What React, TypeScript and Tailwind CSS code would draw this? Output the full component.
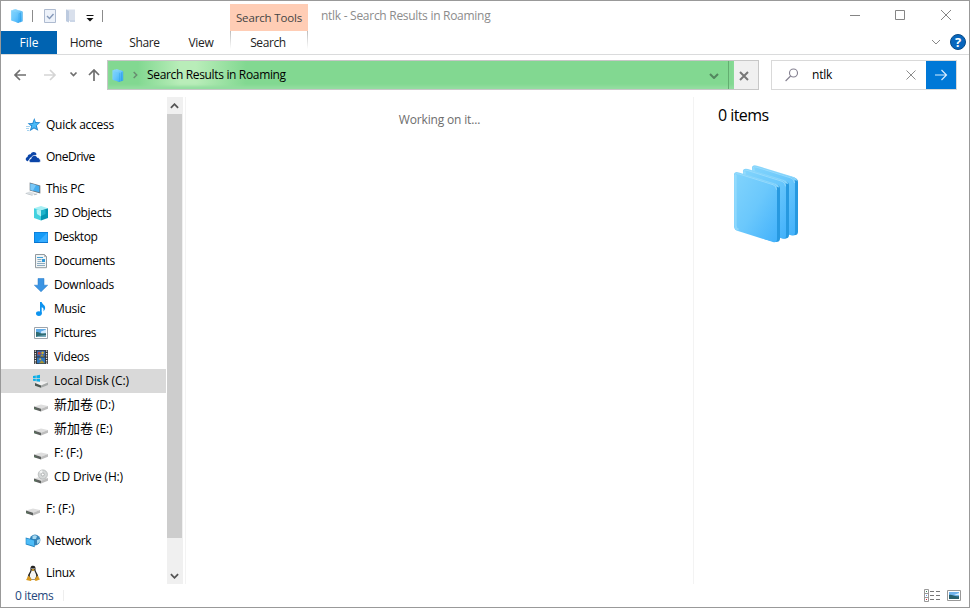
import type { ReactNode } from "react";

const driveBase = (
  <>
    <path d="M1 9.600L8 7.400l7 1.700-7 2.600z" fill="#dedede" />
    <path d="M1 9.600l7 2.100v2.800l-7-2.200z" fill="#5c605e" />
    <path d="M8 11.700l7-2.600v2.600l-7 2.800z" fill="#bdbdbd" />
    <path d="M1.600 11.200l1.600.5v.8L1.600 12z" fill="#508c56" />
  </>
);

const icons: Record<string, ReactNode> = {
  quick: (
    <>
      <path d="M9.300 1l1.500 4.100 4.700.200-3.700 3.100 1.500 5.400-4.300-2.400-4.400 2.900 1.600-5.100-3.600-2.900 4.800-.2z" fill="#2488d0" />
      <path d="M9.300 2.600l1 3.400 3.700.200-3.200 2.500.9 3.400L9 10.300l-2.700 1.800 1-3.500L4.600 7.100l3.600-.2z" fill="#49b9f6" />
      <path d="M1 9.500h4M1 11.500h3M2 13.500h2" stroke="#9ccdec" strokeWidth=".9" />
    </>
  ),
  onedrive: (
    <>
      <path d="M2.900 12.300C.2 12.200 0 8.700 2.500 8.100 2.500 5.900 4 4.900 5.600 5.200 6.900 2.300 10.800 2.500 11.600 5.400L8 7l-3 2z" fill="#0b45a8" />
      <path d="M5.900 13.500C3.400 13.200 3.700 10 6 9.800 6.500 5.900 11.200 5.300 12.200 8.400c1.700-.1 2.200.9 2.100 1.600 1.900.6 1.500 3.500-.3 3.500z" fill="#0b45a8" stroke="#fff" strokeWidth=".6" />
    </>
  ),
  pc: (
    <>
      <path d="M4.700 1.600l10.600 2.800v8L4.700 9.600z" fill="#6a747d" />
      <path d="M5.400 2.500l9 2.400v6.400L5.400 9z" fill="#45aef0" />
      <path d="M5.400 2.500L11 4 8 9.700 5.400 9z" fill="#7cc9f7" />
      <path d="M.7 12l3.700-1.500 6.800 1.800-3.700 1.800z" fill="#dadfe2" />
      <path d="M.7 12l6.800 2.100v.7L.7 12.800zM9 13.200l3.200-.6v.8l-3 .8z" fill="#b4bcc2" />
    </>
  ),
  objects: (
    <>
      <path d="M1 3.200L8 1l7 2.200L8 5.400z" fill="#a6eff4" />
      <path d="M1 3.200l7 2.200v10l-7-2.300z" fill="#42d1df" />
      <path d="M15 3.200L8 5.400v10l7-2.300z" fill="#0697b2" />
      <path d="M3.500 4.500L8 5.400v6L4 9z" fill="#b5f3f5" />
      <path d="M8 5.400l4.500-1V9L8 11z" fill="#1fb5cb" />
    </>
  ),
  desktop: (
    <>
      <path d="M1 3h14v11H1z" fill="#0873ce" />
      <path d="M1.600 3.600h12.800V13H1.600z" fill="#159bf7" />
      <path d="M14.400 3.600V13H5z" fill="#37adff" />
    </>
  ),
  documents: (
    <>
      <path d="M2.500 1.500h9l2 2v11.200h-11z" fill="#f1f4f5" stroke="#929a9f" />
      <path d="M11.500 1.500v2h2" fill="none" stroke="#929a9f" strokeWidth=".7" />
      <path d="M4.500 6.500h4M4.500 8.500h4M4 10.500h8M4 12.500h8" stroke="#8babc0" />
      <path d="M9 6h3v3H9z" fill="#309ad8" />
      <path d="M4 4.500h6" stroke="#40a1d9" />
    </>
  ),
  downloads: <path d="M5 1.500h6v6.700h3.700L8 14.800 1.300 8.200H5z" fill="#3b94e3" stroke="#2579c6" strokeWidth=".5" />,
  music: (
    <>
      <ellipse cx="5.900" cy="12.600" rx="2.900" ry="2.300" fill="#0d93ef" />
      <path d="M7 1h1.700c.3 2.500 4 3 3.400 6.500-.3 1.500-1 2.200-1.900 2.900.8-2 .4-3.600-1.500-4.100v6.400H7z" fill="#0d93ef" />
    </>
  ),
  pictures: (
    <>
      <path d="M1.500 2.500h13v11h-13z" fill="#fff" stroke="#9ca4ac" />
      <path d="M3 4h10v4.500H3z" fill="#61ace9" />
      <path d="M8 6.500l5-2V8H8z" fill="#cfeaff" />
      <path d="M3 7c3-.6 4 1.200 6 1.500l4-.2V12H3z" fill="#2e6b73" />
      <path d="M5 11l8-1v2H3z" fill="#77aabd" />
    </>
  ),
  videos: (
    <>
      <path d="M1 1h14v14H1z" fill="#343638" />
      <path d="M4 1.700h8v5.800H4z" fill="#3764ad" />
      <path d="M4 8.500h8v5.800H4z" fill="#2f76bd" />
      <path d="M2.400 1.500v14M13.600 1.500v14" stroke="#e8e8e8" strokeWidth="1.300" strokeDasharray="1.300 1.100" />
      <circle cx="6.200" cy="4.300" r="1.500" fill="#c1483b" />
      <circle cx="9.600" cy="3.800" r="1.300" fill="#d5b332" />
      <path d="M7 7.500l2-2.400 2 2.400zM6 14.300l2.700-3 3.200 3z" fill="#a99535" />
      <circle cx="7.200" cy="10.300" r="1" fill="#e1ad3b" />
    </>
  ),
  windows: (
    <>
      <path d="M2 10l6-2 7 1.600-7 2.800z" fill="#efefef" />
      <path d="M2 10l6 2.400v2.300l-6-2z" fill="#4d5752" />
      <path d="M8 12.400l7-2.800V12l-7 2.700z" fill="#a5a8a7" />
      <path d="M0 2.900l2.800-.4V5H0zM3.400 2.400L7 1.800V5H3.400zM0 5.700h2.800v2.400L0 7.700zM3.400 5.700H7v3.100l-3.600-.5z" fill="#0aaee8" />
    </>
  ),
  drive: driveBase,
  cd: (
    <>
      {driveBase}
      <circle cx="9.800" cy="5.500" r="4.600" fill="#d5d8d8" stroke="#a9aeae" strokeWidth=".7" />
      <path d="M9.800 5.500L6.200 3a4.300 4.300 0 0 1 3-1.800z" fill="#f5f6f6" />
      <circle cx="9.800" cy="5.500" r="1.500" fill="#fff" stroke="#9b9f9f" strokeWidth=".7" />
    </>
  ),
  network: (
    <>
      <circle cx="10" cy="7" r="5.400" fill="#3684b9" />
      <path d="M7.500 3c2-1.300 3-1 4.500 0l-1 3H7.500zM12 7l3-1-.2 3L12 11z" fill="#a8daf1" />
      <path d="M.7 4.600l9 2.400v7.200l-9-2.600z" fill="#2487c5" />
      <path d="M1.300 5.400l7.700 2v5.700l-7.700-2.300z" fill="#4dbcf7" />
    </>
  ),
  linux: (
    <>
      <path d="M8 .8c-2.500 0-2.700 2.100-2.500 4.200C5.400 7 2.700 9 2.700 12.400l2 2.200h6.600l2-2.300c0-3.200-2.600-5.200-2.800-7.200C10.800 2.800 10.400.8 8 .8z" fill="#242424" />
      <path d="M6.600 5.200L8 6.100l1.400-.9c.3 2.200 1.900 3 1.900 6.200L9.800 14H6.200l-1.500-2.600c0-3.200 1.800-4 1.900-6.200z" fill="#f5f5f3" />
      <path d="M6.400 4.800L8 4.100l1.700.7L8 6z" fill="#f3b021" />
      <path d="M3.400 10.600l3.600 4-1.200 1.300-4.700-1zM12.600 10.600l2.300 3.900-4.100 1.400-1.500-1.200z" fill="#d99a20" />
      <circle cx="7" cy="3.500" r=".55" fill="#fff" />
      <circle cx="9" cy="3.500" r=".55" fill="#fff" />
    </>
  ),
};

type Item = { icon: string; label: string; volume?: string; cls?: string; text?: string };

const rows: Item[] = [
  { icon: "quick", label: "Quick access", cls: "pl-6 mb-2" },
  { icon: "onedrive", label: "OneDrive", cls: "pl-6 mb-2", text: "tracking-[-0.5px]" },
  { icon: "pc", label: "This PC", cls: "pl-6", text: "tracking-[-0.3px]" },
  { icon: "objects", label: "3D Objects", text: "tracking-[-0.35px]" },
  { icon: "desktop", label: "Desktop", text: "tracking-[-0.4px]" },
  { icon: "documents", label: "Documents", text: "tracking-[-0.38px]" },
  { icon: "downloads", label: "Downloads" },
  { icon: "music", label: "Music" },
  { icon: "pictures", label: "Pictures", text: "tracking-[-0.35px]" },
  { icon: "videos", label: "Videos", text: "tracking-[-0.35px]" },
  { icon: "windows", label: "Local Disk (C:)", cls: "pl-8 bg-[#d9d9d9]", text: "tracking-[-0.12px]" },
  { icon: "drive", volume: "新加卷", label: " (D:)", text: "tracking-[-0.15px]" },
  { icon: "drive", volume: "新加卷", label: " (E:)", text: "tracking-[-0.1px]" },
  { icon: "drive", label: "F: (F:)", text: "tracking-[-0.05px]" },
  { icon: "cd", label: "CD Drive (H:)", cls: "pl-8 mb-2", text: "tracking-[-0.15px]" },
  { icon: "drive", label: "F: (F:)", cls: "pl-6 mb-2", text: "tracking-[-0.05px]" },
  { icon: "network", label: "Network", cls: "pl-6 mb-2", text: "tracking-[-0.35px]" },
  { icon: "linux", label: "Linux", cls: "pl-6", text: "tracking-[-0.3px]" },
];

function FolderStack({ className }: { className: string }) {
  return (
    <svg viewBox="0 0 66 78" className={className}>
      <defs>
        <linearGradient id="face" x1="0" y1="0" x2="1" y2="1">
          <stop offset="0" stopColor="#82d4fc" />
          <stop offset=".5" stopColor="#6bc8fc" />
          <stop offset="1" stopColor="#42b1fb" />
        </linearGradient>
      </defs>
      {[
        [18, -6.7],
        [9, -3.4],
        [0, 0],
      ].map(([x, y]) => (
        <g key={x} transform={`translate(${x} ${y})`}>
          <path d="M30 16l12 3.200q4 1.300 4 4.500v49.800q0 4-5 3.500l-11-3z" fill="#2799e0" />
          <path d="M0 10q0-4 5-2.600l36 11q4 1.300 4 4z" fill="#8bd6fb" />
          <path d="M0 10q0-3 4-2l35 11q4 1.400 4 5v50q0 4-4 3L4 66q-4-1.300-4-4.500z" fill="url(#face)" />
          <path d="M1 9.500q1-1.500 4-.5l34 10.700q3.500 1.200 3.500 5" fill="none" stroke="#a0defd" strokeWidth=".8" />
          <path d="M1.500 10v51q0 3 3 4" fill="none" stroke="#a4e1fe" strokeWidth="2.400" opacity=".55" />
        </g>
      ))}
    </svg>
  );
}

function Chevron({ className, up = false }: { className: string; up?: boolean }) {
  return (
    <svg viewBox="0 0 10 6" fill="none" stroke="currentColor" className={className}>
      <path d={up ? "M1 5l4-4 4 4" : "M1 1l4 4 4-4"} />
    </svg>
  );
}

function TitleBar() {
  return (
    <div className="flex h-[30px] shrink-0">
      <div className="flex w-[229px] items-center">
        <FolderStack className="ml-[9px] h-[14px] w-[14px]" />
        <i className="ml-2 h-3 w-px bg-[#8b8b8b]" />
        <svg viewBox="0 0 14 16" className="ml-[10px] h-4 w-[14px]" fill="none">
          <path d="M1.500 1.500h11v13h-11z" fill="#edf2fa" stroke="#aebbd0" />
          <path d="M4 8l2.500 2.500L10.500 6" stroke="#8498b8" strokeWidth="1.400" />
        </svg>
        <svg viewBox="0 0 12 16" className="ml-2 h-4 w-3">
          <path d="M1 1.500h9V13H1z" fill="#d9e0ec" />
          <path d="M1 1.500L4 3v11.500l-3-1.300z" fill="#bccadf" />
          <path d="M5 12h5v2H5z" fill="#cbd6e7" />
        </svg>
        <svg viewBox="0 0 8 8" className="ml-[9px] mt-[3px] h-2 w-2">
          <path d="M.500 1.500h7" stroke="#111" />
          <path d="M.500 4h7L4 7.500z" fill="#111" />
        </svg>
        <i className="ml-2 h-3 w-px bg-[#8b8b8b]" />
      </div>
      <div className="mt-[3px] flex h-[27px] w-[78px] items-center justify-center bg-[#ffcdb5] text-[11.5px] tracking-[-0.16px] text-[#444]">
        Search Tools
      </div>
      <span className="ml-[13px] mt-[6px] text-[#8c8c8c] tracking-[-0.28px]">ntlk - Search Results in Roaming</span>
      <svg viewBox="0 0 104 12" className="ml-auto mr-[17px] mt-2 h-3 w-[104px]" fill="none" stroke="#858585">
        <path d="M2 6.500h10M47.500 1.500h9v9h-9zM93 1l10 10M103 1L93 11" />
      </svg>
    </div>
  );
}

function Tabs() {
  return (
    <div className="flex h-6 shrink-0 border-b border-[#dadbdc] text-center leading-[24px] text-[#222]">
      <span className="w-14 bg-[#0063b1] text-white">File</span>
      <span className="w-[58px] tracking-[-0.4px]">Home</span>
      <span className="w-[59px] tracking-[-0.4px]">Share</span>
      <span className="w-[54px] tracking-[-0.3px]">View</span>
      <div className="ml-[2px] flex w-[78px]">
        <i className="h-[18px] w-px bg-linear-to-b from-[#bbb] to-white" />
        <span className="flex-1 pr-[2px] tracking-[-0.4px]">Search</span>
        <i className="h-[18px] w-px bg-linear-to-b from-[#bbb] to-white" />
      </div>
      <Chevron className="ml-auto mt-2 h-[6px] w-[10px] text-[#888]" />
      <span className="ml-[9px] mr-[3px] mt-[3px] h-4 w-4 rounded-full border border-[#084b87] bg-[#0766bd] text-[13px] font-bold leading-[14px] text-white">
        ?
      </span>
    </div>
  );
}

function AddressRow() {
  return (
    <div className="flex h-[42px] shrink-0 pt-[5px]">
      <svg viewBox="0 0 106 30" className="h-[30px] w-[106px]" fill="none" stroke="#6f6f6f" strokeWidth="1.700">
        <path d="M25 15H14M19 10l-5 5 5 5M93 21V10M88 15l5-5 5 5" />
        <path d="M43 15h11M49 10l5 5-5 5" stroke="#d5d5d5" />
        <path d="M69.500 12.500l3 3 3-3" />
      </svg>
      <div className="flex h-[30px] w-[652px] border border-[#c7c7c7]">
        <div className="flex h-7 w-[626px] items-center bg-[linear-gradient(90deg,#82d891_0px,#82d891_30px,#b9edb9_72px,#b9edb9_88px,#82d891_138px)] shadow-[inset_0_-3px_3px_#93dda0]">
          <FolderStack className="ml-[4px] h-[13px] w-[12px]" />
          <svg viewBox="0 0 5 8" className="ml-[9px] h-2 w-[5px]" fill="none" stroke="#688d70" strokeWidth="1.500">
            <path d="M.7 1l3 3-3 3" />
          </svg>
          <span className="ml-[9px] mb-px tracking-[-0.34px] text-black">Search Results in Roaming</span>
          <Chevron className="ml-auto mr-[9px] mt-[2px] h-[6px] w-[10px] stroke-2 text-[#52865e]" />
          <i className="mr-[5px] h-7 w-px bg-[#63ad70]" />
        </div>
        <div className="flex flex-1 items-center justify-center bg-[#f0f0f0]">
          <svg viewBox="0 0 10 10" className="mr-[5px] mt-[2px] h-[10px] w-[10px]" stroke="#777" strokeWidth="2">
            <path d="M1 1l8 8M9 1L1 9" />
          </svg>
        </div>
      </div>
      <div className="ml-3 flex h-[30px] w-[186px] items-center border border-[#d9d9d9]">
        <svg viewBox="0 0 14 14" className="ml-[13px] h-[14px] w-[14px]" fill="none" stroke="#848090" strokeWidth="1.100">
          <circle cx="8.500" cy="5" r="4" />
          <path d="M5.600 8L.6 13" />
        </svg>
        <span className="mb-px ml-[13px] tracking-[-0.2px] text-black">ntlk</span>
        <svg viewBox="0 0 10 10" className="ml-auto mr-[10px] h-[10px] w-[10px]" stroke="#8c8c8c">
          <path d="M.5.5l9 9M9.500.5l-9 9" />
        </svg>
        <div className="flex h-7 w-[30px] items-center justify-center bg-[#0078d7]">
          <svg viewBox="0 0 14 12" className="h-3 w-[14px]" fill="none" stroke="#d8edff" strokeWidth="1.200">
            <path d="M1 6h11.500M7.500 1l5 5-5 5" />
          </svg>
        </div>
      </div>
    </div>
  );
}

function Sidebar() {
  return (
    <nav className="w-[165px] shrink-0 pt-4">
      {rows.map((r, i) => (
        <div key={i} className={`flex h-6 items-center ${r.cls ?? "pl-8"}`}>
          <svg viewBox="0 0 16 16" className="mr-[5px] h-4 w-4 shrink-0">{icons[r.icon]}</svg>
          <span className={`mb-px whitespace-pre ${r.text ?? "tracking-[-0.28px]"}`}>
            {r.volume && <span className="text-[13px] tracking-normal">{r.volume}</span>}
            {r.label}
          </span>
        </div>
      ))}
    </nav>
  );
}

function StatusBar() {
  return (
    <footer className="flex h-[23px] shrink-0 items-center pl-[14px] text-[#26477c]">
      <span className="tracking-[-0.35px]">0 items</span>
      <i className="ml-[10px] h-[11px] w-px bg-[#eee]" />
      <svg viewBox="0 0 38 14" className="mb-[2px] ml-auto mr-[7px] h-[14px] w-[38px]" fill="none">
        <path d="M.5 1.500h4v12h-4zM.5 5.500h4M.5 9.500h4" stroke="#999" />
        <path d="M2 3h1v1H2z" fill="#37885a" />
        <path d="M2 7h1v1H2z" fill="#5a9aee" />
        <path d="M2 11h1v1H2z" fill="#d02030" />
        <path d="M6 3.500h4M12 3.500h4M6 7.500h4M12 7.500h4M6 11.500h4M12 11.500h4" stroke="#777" />
        <path d="M23.500 2.500h13v10h-13z" stroke="#999" fill="#fff" />
        <path d="M25 4h10v7H25z" fill="#70b3ed" />
        <path d="M25 7c3-1 6 2 10 1v3H25z" fill="#28606d" />
        <path d="M30 7l5-2v2z" fill="#d9efff" />
      </svg>
    </footer>
  );
}

export default function App() {
  return (
    <div className="flex h-[608px] w-[970px] flex-col overflow-hidden border border-[#999] bg-white font-['Open_Sans','Noto_Sans_CJK_SC',sans-serif] text-[12px] leading-[17px] text-black">
      <TitleBar />
      <Tabs />
      <AddressRow />
      <div className="flex h-[487px] shrink-0">
        <Sidebar />
        <div className="ml-px flex w-4 flex-col items-center bg-[#f0f0f0] text-[#555]">
          <div className="flex h-[17px] items-center pr-[2px]"><Chevron up className="h-[6px] w-[9px] stroke-2" /></div>
          <div className="mr-px h-[424px] w-[15px] bg-[#cdcdcd]" />
          <div className="flex flex-1 items-center justify-center pr-[2px] pt-[29px]"><Chevron className="h-[6px] w-[9px] stroke-2" /></div>
        </div>
        <main className="ml-[2px] w-[508px] border-l border-[#f3f3f3] pt-[14px] text-center tracking-[-0.17px] text-[#6d6d6d]">
          Working on it...
        </main>
        <aside className="flex-1 border-l border-[#f3f3f3] pl-6 pt-[7px]">
          <div className="text-[16px] leading-[22px] tracking-[-0.55px]">0 items</div>
          <FolderStack className="ml-4 mt-[39px] h-[78px] w-[66px]" />
        </aside>
      </div>
      <StatusBar />
    </div>
  );
}
